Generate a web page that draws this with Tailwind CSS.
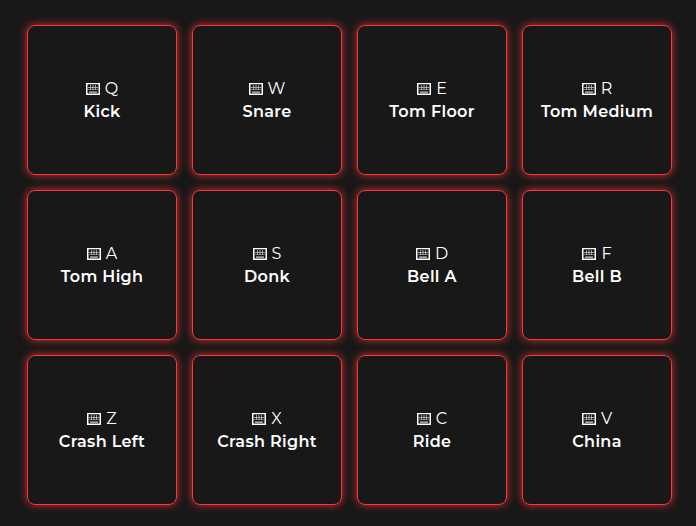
<!DOCTYPE html>
<html lang="en">
<head>
<meta charset="utf-8">
<title>Drum Kit</title>
<script src="https://cdn.jsdelivr.net/npm/@tailwindcss/browser@4"></script>
</head>
<body class="bg-[#181818] w-[696px] h-[526px] overflow-hidden text-white font-['Montserrat','Inter',sans-serif]">
<svg class="hidden"><symbol id="kb" viewBox="0 0 14 12"><path fill="currentColor" fill-rule="evenodd" d="M0 0H14V12H0ZM1.5 1.3V10.6H12.5V1.3Z"/><path fill="currentColor" fill-opacity=".8" d="M4 2h.7v5h-.7zM6.6 2h.8v5h-.8zM9.3 2h.7v5h-.7zM2 4h10v.7H2zM2 6.4h10v.6H2zM3 8.6h8v1.2H3z"/></symbol></svg>
<main id="pads" class="grid grid-cols-[repeat(4,150px)] auto-rows-[150px] gap-[15px] pl-[27px] pt-[25px]"></main>
<template id="pad">
<button class="flex flex-col items-center justify-center rounded-[8px] border border-[#ff3535] shadow-[0_0_8px_rgba(255,53,53,0.8)] text-[16px] leading-[23px] whitespace-nowrap">
<span class="flex items-center h-[23px]"><svg class="w-[14px] h-[12px] mr-[5px]"><use href="#kb"/></svg><span data-key class="flex justify-center font-normal"></span></span>
<span data-name class="font-semibold tracking-[0.33px]"></span>
</button>
</template>
<script>
const sounds = [
["Q","Kick"],["W","Snare"],["E","Tom Floor"],["R","Tom Medium"],
["A","Tom High"],["S","Donk"],["D","Bell A"],["F","Bell B"],
["Z","Crash Left"],["X","Crash Right"],["C","Ride"],["V","China"]
];
for (const [key, name] of sounds) {
  const pad = document.getElementById("pad").content.cloneNode(true);
  pad.querySelector("[data-key]").textContent = key;
  pad.querySelector("[data-name]").textContent = name;
  document.getElementById("pads").append(pad);
}
</script>
</body>
</html>
